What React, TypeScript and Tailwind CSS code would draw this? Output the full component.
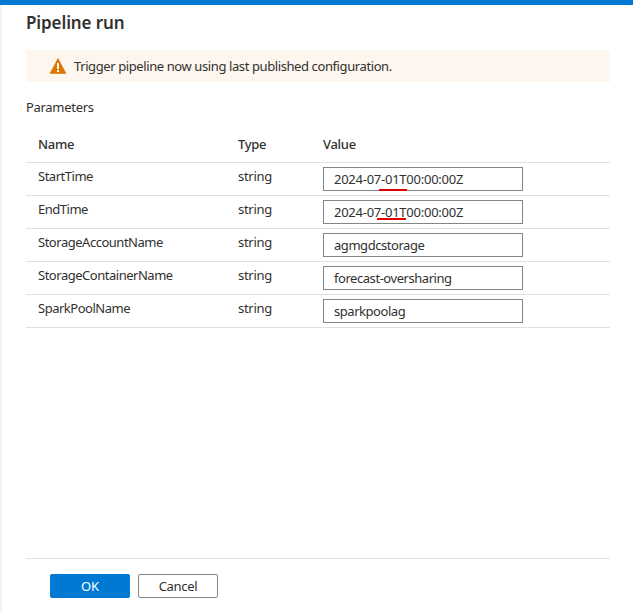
import React from "react";

const ROWS = [
  { name: "StartTime", value: "2024-07-01T00:00:00Z", track: "tracking-[-0.25px]", squiggle: "left-[55px] w-[28px] top-[21px]" },
  { name: "EndTime", value: "2024-07-01T00:00:00Z", track: "tracking-[-0.25px]", squiggle: "left-[53px] w-[29px] top-[17px]" },
  { name: "StorageAccountName", value: "agmgdcstorage", track: "tracking-[-0.45px]" },
  { name: "StorageContainerName", value: "forecast-oversharing", track: "tracking-[-0.45px]" },
  { name: "SparkPoolName", value: "sparkpoolag", track: "tracking-[-0.45px]" },
];

const WarningIcon = () => (
  <svg width="16" height="16" viewBox="0 0 16 16" className="shrink-0">
    <path d="M8 0.5 L16 15.5 L0 15.5 Z" fill="#db7500" stroke="#db7500" strokeWidth="0.6" strokeLinejoin="round" />
    <rect x="7" y="5" width="2" height="6" fill="#fff" />
    <rect x="7" y="12" width="2" height="2" fill="#fff" />
  </svg>
);

export default function App() {
  return (
    <div className="w-[633px] h-[613px] flex flex-col bg-white text-[13px] text-[#323130] overflow-hidden" style={{ fontFamily: '"Noto Sans", "Open Sans", sans-serif' }}>
      <div className="h-[5px] bg-[#0078d4] shrink-0" />
      <div className="flex-1 flex min-h-0">
        <div className="w-[2px] bg-[#f3f3f3] shrink-0" />
        <div className="flex-1 flex flex-col pl-[24px] pr-[23px] min-w-0">
          <h1 className="text-[17px] leading-[24px] font-semibold mt-[6px] tracking-[-0.1px]">Pipeline run</h1>

          <div className="h-[32px] mt-[15px] bg-[#fdf6ef] flex items-center gap-[8px] pl-[24px]">
            <WarningIcon />
            <span className="tracking-[-0.4px] pt-[2px]">Trigger pipeline now using last published configuration.</span>
          </div>

          <div className="mt-[16px] leading-[18px] tracking-[-0.3px]">Parameters</div>

          <table className="mt-[12px] w-full border-collapse table-fixed">
            <thead>
              <tr className="h-[34px] border-b border-[#e0e0e0]">
                <th className="w-[212px] pl-[12px] text-left font-medium tracking-[-0.3px]">Name</th>
                <th className="w-[85px] text-left font-medium tracking-[-0.3px]">Type</th>
                <th className="text-left font-medium tracking-[-0.3px]">Value</th>
              </tr>
            </thead>
            <tbody>
              {ROWS.map((row) => (
                <tr key={row.name} className="h-[33px] border-b border-[#e0e0e0]">
                  <td className="pl-[12px] pb-[3px] tracking-[-0.48px]">{row.name}</td>
                  <td className="pb-[3px] tracking-[-0.3px]">string</td>
                  <td className="align-top pt-[4px]">
                    <div className={`relative w-[200px] h-[24px] border border-[#858585] pl-[10px] leading-[22px] whitespace-nowrap ${row.track}`}>
                      {row.value}
                      {row.squiggle && <div className={`absolute h-[2px] bg-[#e00000] ${row.squiggle}`} />}
                    </div>
                  </td>
                </tr>
              ))}
            </tbody>
          </table>

          <div className="mt-auto border-t border-[#e0e0e0] h-[55px] flex items-start gap-[8px] pl-[24px] pt-[15px]">
            <button className="w-[80px] h-[24px] bg-[#0078d4] text-white rounded-[2px] pt-[1px]">OK</button>
            <button className="w-[80px] h-[24px] bg-white border border-[#858585] rounded-[2px] tracking-[-0.3px] pt-[1px]">Cancel</button>
          </div>
        </div>
      </div>
    </div>
  );
}
